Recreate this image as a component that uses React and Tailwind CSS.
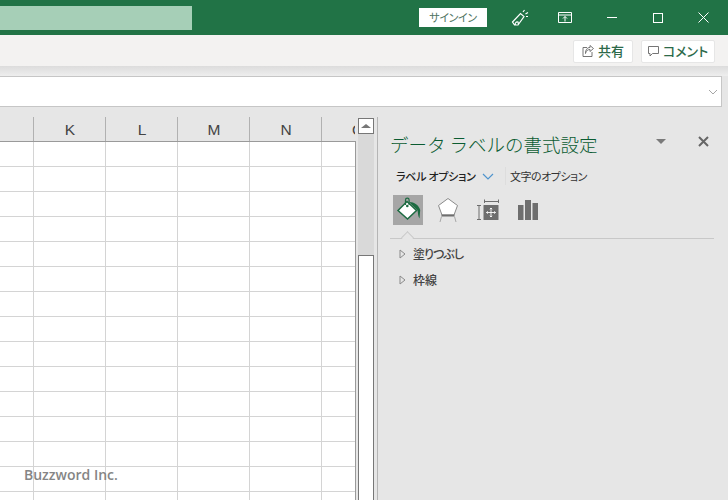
import React from 'react';

const jp = { fontFamily: '"Noto Sans CJK JP", sans-serif' };
const rows = Array.from({ length: 15 });

const Cell = ({ w, last }) => (
  <div className={`${w} h-[25px] shrink-0 border-b border-[#d4d4d4] ${last ? '' : 'border-r'}`} />
);

const ColHead = ({ label }) => (
  <div className="w-[72px] h-[24px] shrink-0 border-r border-[#b1b1b1] flex items-center justify-center pt-[2px] pl-px text-[15.5px] text-[#444444] font-['Liberation_Sans',sans-serif]">
    {label}
  </div>
);

const FillIcon = () => (
  <svg width="30" height="30" viewBox="0 0 30 30">
    <path d="M14 6.5 L23.5 15.5 L14.5 24 L5 15.5 Z" fill="#fff" stroke="#1d6b42" strokeWidth="1.5" />
    <path d="M12.5 10 V5 a1.8 1.8 0 0 1 3.6 0 V10" fill="none" stroke="#1d6b42" strokeWidth="1.2" />
    <circle cx="14.3" cy="11" r="1.3" fill="#1d6b42" />
    <path d="M16.5 7 C21 7 26 10 27.2 15 L26.5 23.5 C25 21.5 25 18 24.6 15.5 L17.5 8.5 Z" fill="#1d6b42" />
  </svg>
);

const ShapeIcon = () => (
  <svg width="22" height="26" viewBox="0 0 22 26">
    <path d="M11 1.5 L20.5 8.5 L17 18 H5 L1.5 8.5 Z" fill="#fff" stroke="#8a8a8a" strokeWidth="1" />
    <path d="M4.5 18.5 H17.5" stroke="#6e6e6e" strokeWidth="2" />
    <path d="M4.5 19.5 L3 25 M17.5 19.5 L19 25" stroke="#a8a8a8" strokeWidth="1" fill="none" />
  </svg>
);

const SizeIcon = () => (
  <svg width="22" height="22" viewBox="0 0 22 22">
    <path d="M7.5 0.5 V4 M21.5 0.5 V4 M7.5 2.5 H21.5" stroke="#6e6e6e" strokeWidth="1" fill="none" />
    <path d="M0 6.5 H4 M0 20.5 H4 M2 6.5 V20.5" stroke="#6e6e6e" strokeWidth="1" fill="none" />
    <rect x="6.5" y="6" width="15" height="15" rx="0.5" fill="#6e6e6e" />
    <path d="M14 9 V18 M9.5 13.5 H18.5 M12.8 10.2 L14 9 L15.2 10.2 M12.8 16.8 L14 18 L15.2 16.8 M10.7 12.3 L9.5 13.5 L10.7 14.7 M17.3 12.3 L18.5 13.5 L17.3 14.7" stroke="#fff" strokeWidth="0.9" fill="none" />
  </svg>
);

const BarsIcon = () => (
  <svg width="20" height="20" viewBox="0 0 20 20">
    <rect x="0" y="5" width="5.5" height="15" fill="#6e6e6e" />
    <rect x="7" y="0" width="6" height="20" fill="#6e6e6e" />
    <rect x="14.5" y="3" width="5.5" height="17" fill="#6e6e6e" />
  </svg>
);

const Section = ({ label, tight }) => (
  <div className="flex items-center h-[26px] pl-[9px] gap-[7px]">
    <svg width="7" height="10" viewBox="0 0 7 10">
      <path d="M1 1 L6 5 L1 9 Z" fill="none" stroke="#8a8a8a" strokeWidth="1" />
    </svg>
    <span className={`text-[12px] font-medium text-[#444444] [font-feature-settings:'palt'] ${tight ? 'tracking-[-1px]' : ''}`}>{label}</span>
  </div>
);

export default function App() {
  return (
    <div style={jp} className="w-[728px] h-[500px] overflow-hidden flex flex-col bg-[#e6e6e6]">
      {/* title bar */}
      <div className="h-[35px] shrink-0 bg-[#217346] flex items-center text-white">
        <div className="w-[192px] h-[24px] bg-[#a6cfb7]" />
        <div className="flex-1" />
        <div className="w-[68px] h-[19px] bg-white text-[#4f7462] text-[11px] tracking-[-0.4px] [font-feature-settings:'palt'] flex items-center justify-center mr-[24px]">
          サインイン
        </div>
        <svg width="18" height="18" viewBox="0 0 18 18" fill="none" stroke="#fff" strokeWidth="1.2" className="mr-[29px]">
          <path d="M1.5 13 L9.5 4.5 L13 7.5 L7 16 H3.5 Z M4.5 16 C3.5 14.5 5 12.5 7 13 L7.5 15" />
          <path d="M12 3 L13.5 1 M14.5 5 L17 3.5 M15 7.5 L17 7.5" />
        </svg>
        <svg width="14" height="11" viewBox="0 0 14 11" fill="none" stroke="#fff" strokeWidth="1" className="mr-[35px]">
          <path d="M0.5 0.5 H13.5 V10.5 H0.5 Z M0.5 3 H13.5" />
          <path d="M7 9.5 V4.5 M5 6.5 L7 4.5 L9 6.5" />
        </svg>
        <div className="w-[10px] h-px bg-white mr-[36px]" />
        <div className="w-[10px] h-[10px] border border-white mr-[35px]" />
        <svg width="11" height="11" viewBox="0 0 11 11" stroke="#fff" strokeWidth="1" className="mr-[19px]">
          <path d="M0.5 0.5 L10.5 10.5 M10.5 0.5 L0.5 10.5" />
        </svg>
      </div>

      {/* ribbon bottom */}
      <div className="h-[31px] shrink-0 bg-[#f3f2f1] flex items-center justify-end gap-[8px] pr-[13px] pt-px">
        <div className="w-[60px] h-[23px] bg-white border border-[#e6e6e6] rounded-[2px] flex items-center justify-center gap-[4px]">
          <svg width="12" height="12" viewBox="0 0 12 12" fill="none" stroke="#666666" strokeWidth="0.9">
            <path d="M5 2.5 H1 V11.5 H10 V7" />
            <path d="M3.5 8.5 C4 5.5 6 4.5 8 4.5 V6.5 L11.5 3.5 L8 0.5 V2.5 C5 2.5 3.5 5 3.5 8.5 Z" />
          </svg>
          <span className="text-[13px] font-medium text-[#2d6a4a]">共有</span>
        </div>
        <div className="w-[74px] h-[23px] bg-white border border-[#e6e6e6] rounded-[2px] flex items-center justify-center gap-[4px]">
          <svg width="11" height="11" viewBox="0 0 11 11" fill="none" stroke="#666666" strokeWidth="0.9">
            <path d="M0.5 0.5 H10.5 V7.5 H4.5 L2 10 V7.5 H0.5 Z" />
          </svg>
          <span className="text-[13px] font-medium text-[#2d6a4a] [font-feature-settings:'palt']">コメント</span>
        </div>
      </div>

      {/* shadow under the ribbon */}
      <div className="h-[10px] shrink-0 bg-gradient-to-b from-[#dcdcdc] to-[#eeeeee]" />

      {/* formula bar */}
      <div className="h-[31px] shrink-0 bg-white border-y border-[#c6c6c6] mr-[6px] border-r flex items-center justify-end pr-[3px]">
        <svg width="10" height="6" viewBox="0 0 10 6" fill="none" stroke="#a6a6a6" strokeWidth="1">
          <path d="M1 1 L5 5 L9 1" />
        </svg>
      </div>

      <div className="flex flex-1 min-h-0">
        {/* sheet */}
        <div className="w-[358px] shrink-0 pt-[10px] flex flex-col">
          <div className="flex h-[24px] shrink-0 w-[355px] overflow-hidden">
            <div className="w-[34px] shrink-0 border-r border-[#b1b1b1]" />
            <ColHead label="K" />
            <ColHead label="L" />
            <ColHead label="M" />
            <ColHead label="N" />
            <div className="flex-1 overflow-hidden">
              <div className="w-[72px] h-[24px] flex items-center justify-center pt-[2px] text-[15.5px] text-[#444444] font-['Liberation_Sans',sans-serif]">O</div>
            </div>
          </div>
          <div className="relative w-[356px] bg-white border-t border-r border-[#9a9a9a] flex-1 overflow-hidden">
            {rows.map((_, i) => (
              <div key={i} className="flex border-[#d4d4d4]">
                <Cell w="w-[34px]" />
                <Cell w="w-[72px]" />
                <Cell w="w-[72px]" />
                <Cell w="w-[72px]" />
                <Cell w="w-[72px]" />
                <Cell w="w-[33px]" last />
              </div>
            ))}
            {/* watermark sits over the cells */}
            <div className="absolute left-[24px] top-[322px] text-[14px] font-semibold text-[#858585] font-['Open_Sans',sans-serif]">
              Buzzword Inc.
            </div>
          </div>
        </div>

        {/* vertical scrollbar */}
        <div className="w-[16px] shrink-0 mt-[11px] bg-[#d9d9d9] flex flex-col justify-between">
          <div className="h-[16px] bg-white border border-[#777777] flex items-center justify-center">
            <div className="w-0 h-0 border-x-[5px] border-x-transparent border-b-[4px] border-b-[#777777]" />
          </div>
          <div className="h-[245px] bg-white border border-[#777777] border-b-0" />
        </div>

        <div className="w-[3px] shrink-0" />
        <div className="w-px shrink-0 bg-[#b5b5b5] mt-[10px]" />

        {/* format pane */}
        <div className="flex-1 min-w-0 pl-[12px] pr-[14px] flex flex-col">
          <div className="flex items-center h-[26px] mt-[24px]">
            <span className="text-[18.5px] font-light leading-none text-[#0b5c32] whitespace-nowrap">データ ラベルの書式設定</span>
            <div className="flex-1" />
            <div className="w-0 h-0 border-x-[5px] border-x-transparent border-t-[5px] border-t-[#7a7a7a] mr-[32px] mb-[5px]" />
            <svg width="11" height="11" viewBox="0 0 11 11" stroke="#666666" strokeWidth="2" className="mr-[5px] mb-[5px]">
              <path d="M1 1 L10 10 M10 1 L1 10" />
            </svg>
          </div>
          <div className="flex items-center h-[20px] mt-[9px] pl-[6px]">
            <span className="w-[81px] text-[11px] tracking-[-0.25px] font-medium text-[#222222] whitespace-nowrap [font-feature-settings:'palt']">ラベル オプション</span>
            <svg width="12" height="7" viewBox="0 0 12 7" fill="none" stroke="#4f94cd" strokeWidth="1.2" className="ml-[5px]">
              <path d="M1 1 L6 6 L11 1" />
            </svg>
            <div className="w-px h-[18px] bg-[#dddddd] ml-[11px]" />
            <span className="text-[11px] tracking-[-0.5px] text-[#333333] whitespace-nowrap ml-[4px] [font-feature-settings:'palt']">文字のオプション</span>
          </div>
          <div className="flex items-center h-[30px] mt-[9px] pl-[3px]">
            <div className="w-[30px] h-[30px] bg-[#a6a6a6] flex items-center justify-center">
              <FillIcon />
            </div>
            <div className="ml-[14px] flex"><ShapeIcon /></div>
            <div className="ml-[18px] flex"><SizeIcon /></div>
            <div className="ml-[19px] flex"><BarsIcon /></div>
          </div>
          <div className="relative h-px bg-[#c8c8c8] mt-[13px] shrink-0">
            {/* notch pointing at the selected tab */}
            <div className="absolute left-[13px] -top-[5px] w-[9px] h-[9px] bg-[#e6e6e6] border-l border-t border-[#c8c8c8] rotate-45" />
          </div>
          <div className="mt-[2px]">
            <Section label="塗りつぶし" tight />
            <Section label="枠線" />
          </div>
        </div>
      </div>
    </div>
  );
}
